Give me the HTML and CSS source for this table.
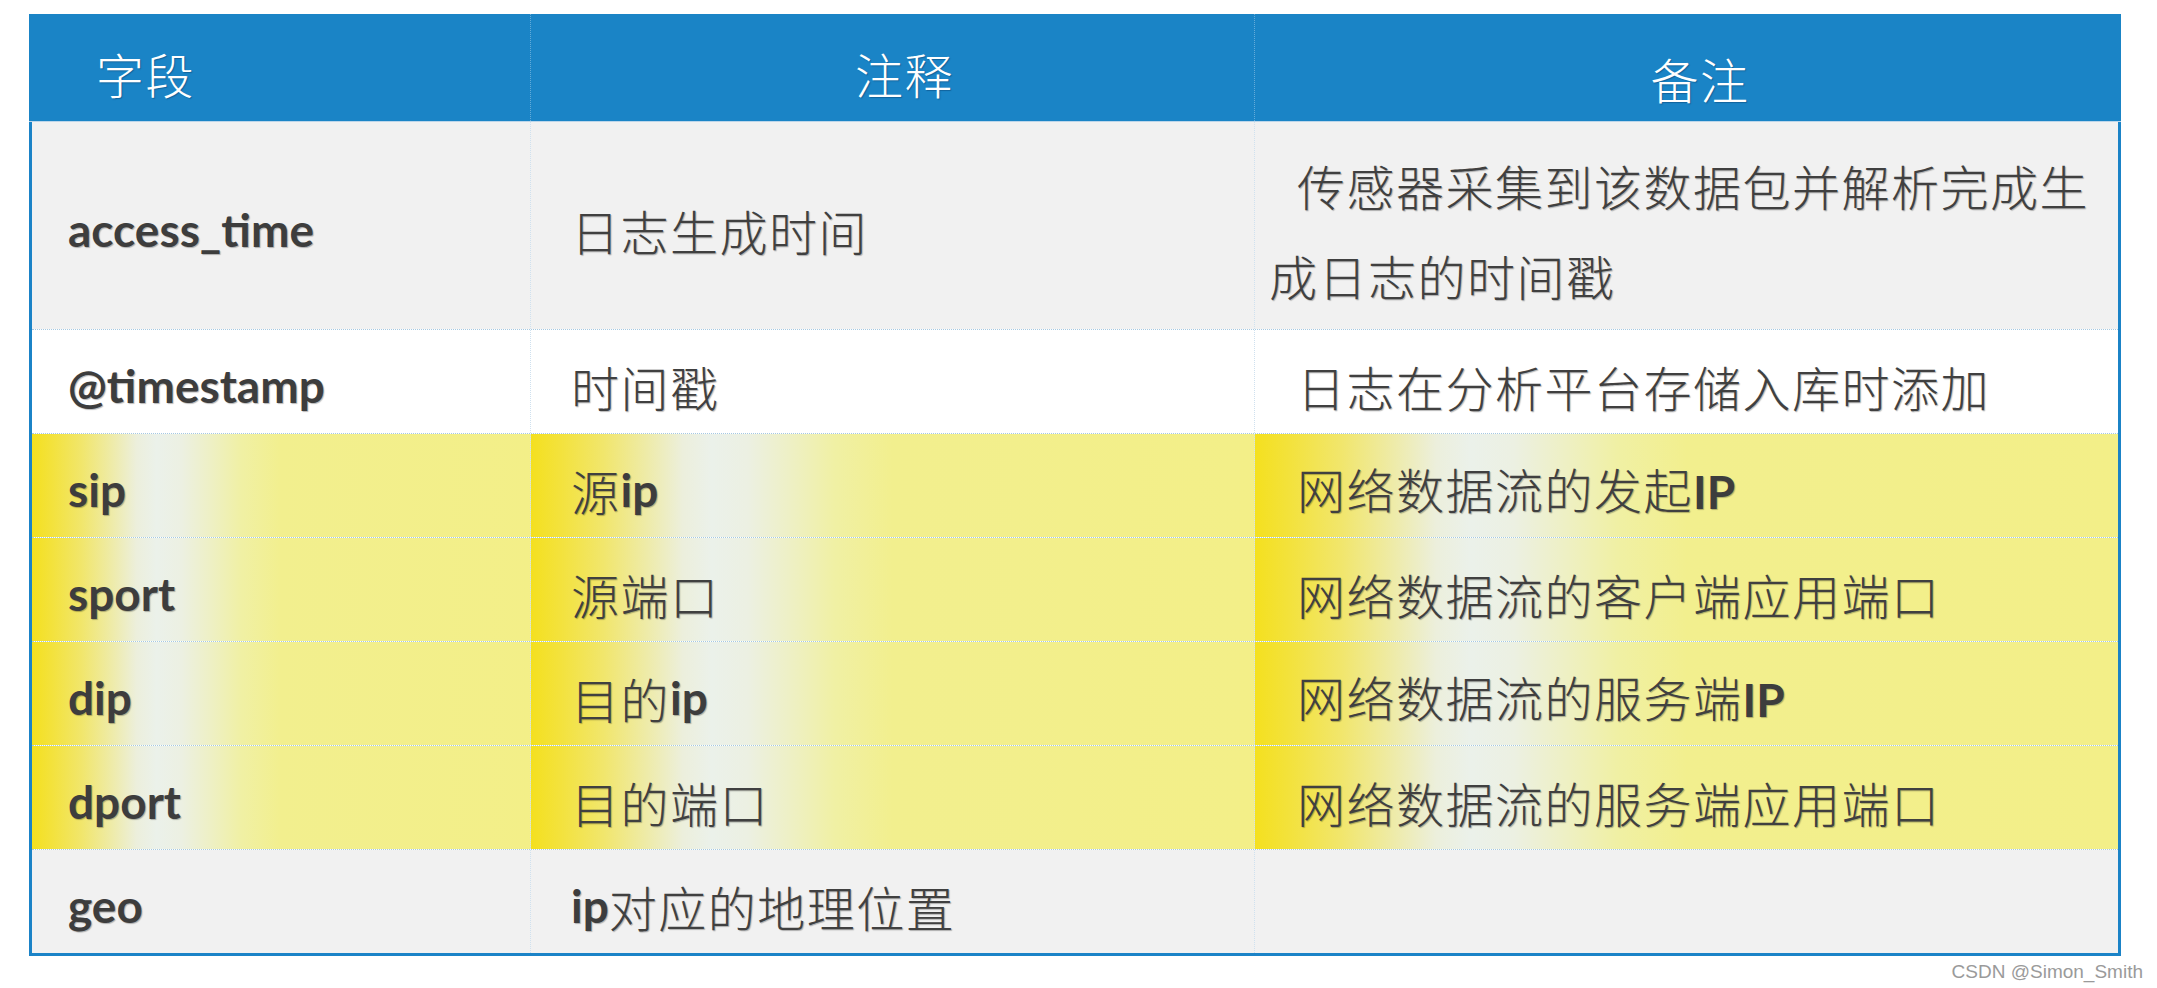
FILE: index.html
```html
<!DOCTYPE html>
<html lang="zh-CN">
<head>
<meta charset="utf-8">
<title>字段说明</title>
<link rel="stylesheet" href="styles.css">
</head>
<body>
<div class="sheet">
  <div class="row head">
    <div class="cell c1">字段</div>
    <div class="cell c2">注释</div>
    <div class="cell c3">备注</div>
  </div>
  <div class="row tall grey">
    <div class="cell c1"><b class="en">access_time</b></div>
    <div class="cell c2">日志生成时间</div>
    <div class="cell c3"><p class="note">传感器采集到该数据包并解析完成生<br>成日志的时间戳</p></div>
  </div>
  <div class="row white">
    <div class="cell c1"><b class="en">@timestamp</b></div>
    <div class="cell c2">时间戳</div>
    <div class="cell c3"><p class="note">日志在分析平台存储入库时添加</p></div>
  </div>
  <div class="row yellow">
    <div class="cell c1"><b class="en">sip</b></div>
    <div class="cell c2">源<b class="en">ip</b></div>
    <div class="cell c3"><p class="note">网络数据流的发起<b class="en">IP</b></p></div>
  </div>
  <div class="row yellow">
    <div class="cell c1"><b class="en">sport</b></div>
    <div class="cell c2">源端口</div>
    <div class="cell c3"><p class="note">网络数据流的客户端应用端口</p></div>
  </div>
  <div class="row yellow">
    <div class="cell c1"><b class="en">dip</b></div>
    <div class="cell c2">目的<b class="en">ip</b></div>
    <div class="cell c3"><p class="note">网络数据流的服务端<b class="en">IP</b></p></div>
  </div>
  <div class="row yellow">
    <div class="cell c1"><b class="en">dport</b></div>
    <div class="cell c2">目的端口</div>
    <div class="cell c3"><p class="note">网络数据流的服务端应用端口</p></div>
  </div>
  <div class="row grey last">
    <div class="cell c1"><b class="en">geo</b></div>
    <div class="cell c2"><b class="en">ip</b>对应的地理位置</div>
    <div class="cell c3"></div>
  </div>
</div>
<div class="mark">CSDN @Simon_Smith</div>
</body>
</html>
```

FILE: styles.css
```css
html, body {
  margin: 0;
  padding: 0;
  background: #ffffff;
}

body {
  font-family: "Noto Sans CJK SC", "Noto Sans", sans-serif;
  color: #404040;
}

.sheet {
  width: 2092px;
  margin: 14px 0 0 29px;
  border: 3px solid #1b83c7;
  border-top: 0;
  box-sizing: border-box;
}

.row {
  display: grid;
  grid-template-columns: 498px 724px 864px;
  height: 104px;
  box-sizing: border-box;
  border-bottom: 1px dotted #a6c9e2;
}

.row.tall {
  height: 208px;
}

.row.last {
  height: 103px;
  border-bottom: 0;
}

.row.grey .cell {
  background: #f1f1f1;
}

.row.white .cell {
  background: #ffffff;
}

.row.yellow .cell {
  background: linear-gradient(to right,
    #f4e01f 0%,
    #f3e23c 4%,
    #f1e66c 10%,
    #eeeba8 16%,
    #ecefdc 21%,
    #ebf1ea 25%,
    #ecf0e2 30%,
    #eef0c4 36%,
    #f0f0a4 42%,
    #f2ef8e 50%,
    #f3ef88 100%);
}

.cell {
  display: flex;
  align-items: center;
  box-sizing: border-box;
  padding-top: 8px;
  font-size: 48px;
  letter-spacing: 1.5px;
  font-weight: 300;
  white-space: nowrap;
  text-shadow: 1px 1px 1px rgba(0, 0, 0, 0.28);
}

.cell.c1 {
  padding-left: 36px;
}

.cell.c2 {
  padding-left: 40px;
  border-left: 1px dotted #cfe1ef;
}

.cell.c3 {
  padding-left: 14px;
  border-left: 1px dotted #cfe1ef;
}

.note {
  margin: 0;
  text-indent: 28px;
  line-height: 90px;
}

.en {
  font-family: "Lato", "Liberation Sans", sans-serif;
  font-weight: 700;
  font-size: 46px;
  letter-spacing: 0;
  color: #3d3d3d;
}

.row.head {
  height: 108px;
  background: #1a84c6;
  border-bottom: 1px solid #bcd6ea;
  margin-left: -3px;
  margin-right: -3px;
  grid-template-columns: 501px 724px 867px;
}

.row.head .cell {
  color: #ffffff;
  font-weight: 300;
  padding-top: 10px;
  text-shadow: 1px 1px 1px rgba(0, 40, 80, 0.35);
}

.row.head .cell.c1 {
  padding-left: 67px;
}

.row.head .cell.c2,
.row.head .cell.c3 {
  justify-content: center;
  padding-left: 24px;
  border-left: 1px dotted rgba(190, 220, 240, 0.45);
}

.row.head .cell.c3 {
  padding-left: 24px;
  padding-top: 20px;
}

.mark {
  text-align: right;
  padding-right: 14px;
  margin-top: 5px;
  font-family: "Liberation Sans Narrow", "Liberation Sans", sans-serif;
  font-stretch: condensed;
  font-size: 19px;
  color: #9a9a9a;
}
```
